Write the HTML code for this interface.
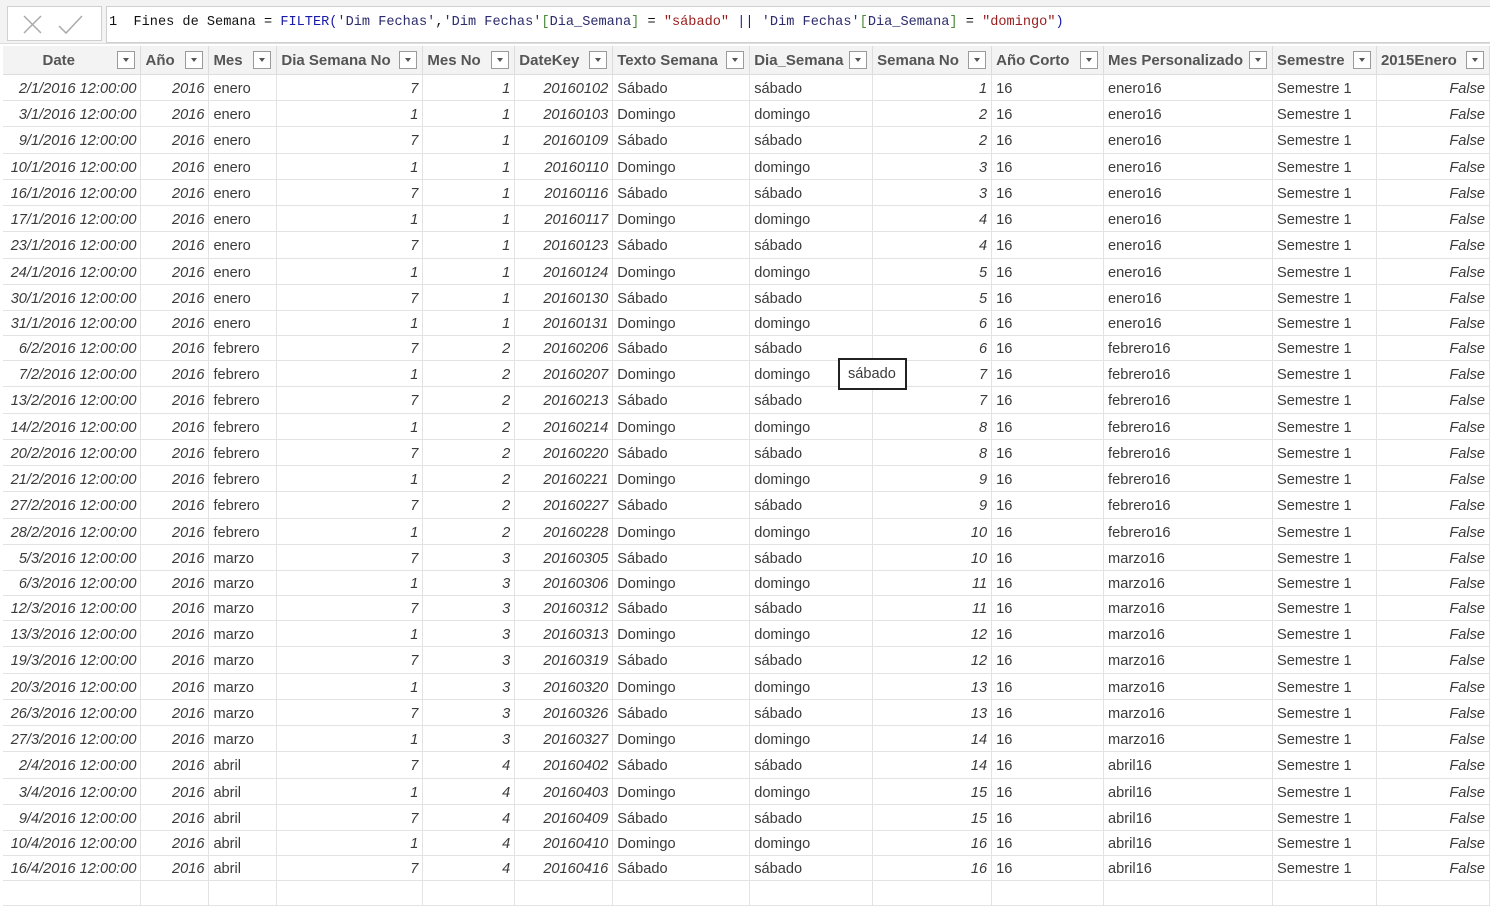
<!DOCTYPE html>
<html><head><meta charset="utf-8"><style>
*{box-sizing:border-box;margin:0;padding:0}
body{width:1490px;height:888px;overflow:hidden;background:#fff;font-family:"Liberation Sans",sans-serif;color:#3a3a3a;position:relative}
.topbar{position:absolute;left:0;top:0;width:1490px;height:44px;background:#f3f3f3;border-bottom:1px solid #ddd}
.btns{position:absolute;left:7px;top:6px;width:95px;height:35px;background:#fff;border:1px solid #d0d0d0}
.fx{position:absolute;left:106px;top:6px;width:1390px;height:37px;background:#fff;border:1px solid #d0d0d0;font-family:"Liberation Mono",monospace;font-size:13.6px;padding:8px 0 0 2px;white-space:pre;color:#111}
.b{color:#1a1aa8}.s{color:#9a1b1b}.g{color:#4a8a3a}.t{color:#2b2b6e}
table{position:absolute;left:3px;top:46px;border-collapse:collapse;table-layout:fixed;font-size:14.6px}
th{height:28px;background:#f3f3f3;color:#555;font-weight:bold;font-size:15px;text-align:left;padding:1px 4px 0;border-right:1px solid #dcdcdc;border-bottom:1px solid #dcdcdc;position:relative;white-space:nowrap}
th.c{text-align:center;padding-right:30px}
th i{position:absolute;right:5px;top:5px;width:18px;height:18px;background:#fff;border:1px solid #9a9a9a}
th i:after{content:"";position:absolute;left:5px;top:6px;border-left:3.5px solid transparent;border-right:3.5px solid transparent;border-top:4px solid #555}
td{padding:3px 4px 0;border-right:1px solid #e3e3e3;border-bottom:1px solid #e3e3e3;white-space:nowrap;overflow:hidden}
td.r{text-align:right;font-style:italic}
.tip{position:absolute;left:838px;top:358px;width:69px;height:32px;border:2px solid #222;background:#fff;font-size:14.6px;padding:6px 0 0 8px}
</style></head><body>
<div class="topbar"></div>
<div class="btns"><svg width="95" height="35" viewBox="0 0 95 35"><path d="M16 9L33 26M33 9L16 26" stroke="#aaa" stroke-width="1.5" fill="none"/><path d="M51 19l7 7 16-17" stroke="#aaa" stroke-width="1.5" fill="none"/></svg></div>
<div class="fx">1  Fines de Semana = <span class="b">FILTER(</span><span class="t">'Dim Fechas'</span>,<span class="t">'Dim Fechas'</span><span class="g">[</span><span class="t">Dia_Semana</span><span class="g">]</span> = <span class="s">"sábado"</span> <span class="b">||</span> <span class="t">'Dim Fechas'</span><span class="g">[</span><span class="t">Dia_Semana</span><span class="g">]</span> = <span class="s">"domingo"</span><span class="b">)</span></div>
<table>
<colgroup><col style="width:138px"><col style="width:68px"><col style="width:68px"><col style="width:146px"><col style="width:92px"><col style="width:98px"><col style="width:137px"><col style="width:123px"><col style="width:119px"><col style="width:112px"><col style="width:169px"><col style="width:104px"><col style="width:113px"></colgroup>
<tr><th class="c">Date<i></i></th><th>Año<i></i></th><th>Mes<i></i></th><th>Dia Semana No<i></i></th><th>Mes No<i></i></th><th>DateKey<i></i></th><th>Texto Semana<i></i></th><th>Dia_Semana<i></i></th><th>Semana No<i></i></th><th>Año Corto<i></i></th><th>Mes Personalizado<i></i></th><th>Semestre<i></i></th><th>2015Enero<i></i></th></tr>
<tr style="height:26px"><td class="r">2/1/2016 12:00:00</td><td class="r">2016</td><td>enero</td><td class="r">7</td><td class="r">1</td><td class="r">20160102</td><td>Sábado</td><td>sábado</td><td class="r">1</td><td>16</td><td>enero16</td><td>Semestre 1</td><td class="r">False</td></tr>
<tr style="height:26px"><td class="r">3/1/2016 12:00:00</td><td class="r">2016</td><td>enero</td><td class="r">1</td><td class="r">1</td><td class="r">20160103</td><td>Domingo</td><td>domingo</td><td class="r">2</td><td>16</td><td>enero16</td><td>Semestre 1</td><td class="r">False</td></tr>
<tr style="height:27px"><td class="r">9/1/2016 12:00:00</td><td class="r">2016</td><td>enero</td><td class="r">7</td><td class="r">1</td><td class="r">20160109</td><td>Sábado</td><td>sábado</td><td class="r">2</td><td>16</td><td>enero16</td><td>Semestre 1</td><td class="r">False</td></tr>
<tr style="height:26px"><td class="r">10/1/2016 12:00:00</td><td class="r">2016</td><td>enero</td><td class="r">1</td><td class="r">1</td><td class="r">20160110</td><td>Domingo</td><td>domingo</td><td class="r">3</td><td>16</td><td>enero16</td><td>Semestre 1</td><td class="r">False</td></tr>
<tr style="height:26px"><td class="r">16/1/2016 12:00:00</td><td class="r">2016</td><td>enero</td><td class="r">7</td><td class="r">1</td><td class="r">20160116</td><td>Sábado</td><td>sábado</td><td class="r">3</td><td>16</td><td>enero16</td><td>Semestre 1</td><td class="r">False</td></tr>
<tr style="height:26px"><td class="r">17/1/2016 12:00:00</td><td class="r">2016</td><td>enero</td><td class="r">1</td><td class="r">1</td><td class="r">20160117</td><td>Domingo</td><td>domingo</td><td class="r">4</td><td>16</td><td>enero16</td><td>Semestre 1</td><td class="r">False</td></tr>
<tr style="height:27px"><td class="r">23/1/2016 12:00:00</td><td class="r">2016</td><td>enero</td><td class="r">7</td><td class="r">1</td><td class="r">20160123</td><td>Sábado</td><td>sábado</td><td class="r">4</td><td>16</td><td>enero16</td><td>Semestre 1</td><td class="r">False</td></tr>
<tr style="height:26px"><td class="r">24/1/2016 12:00:00</td><td class="r">2016</td><td>enero</td><td class="r">1</td><td class="r">1</td><td class="r">20160124</td><td>Domingo</td><td>domingo</td><td class="r">5</td><td>16</td><td>enero16</td><td>Semestre 1</td><td class="r">False</td></tr>
<tr style="height:26px"><td class="r">30/1/2016 12:00:00</td><td class="r">2016</td><td>enero</td><td class="r">7</td><td class="r">1</td><td class="r">20160130</td><td>Sábado</td><td>sábado</td><td class="r">5</td><td>16</td><td>enero16</td><td>Semestre 1</td><td class="r">False</td></tr>
<tr style="height:25px"><td class="r">31/1/2016 12:00:00</td><td class="r">2016</td><td>enero</td><td class="r">1</td><td class="r">1</td><td class="r">20160131</td><td>Domingo</td><td>domingo</td><td class="r">6</td><td>16</td><td>enero16</td><td>Semestre 1</td><td class="r">False</td></tr>
<tr style="height:25px"><td class="r">6/2/2016 12:00:00</td><td class="r">2016</td><td>febrero</td><td class="r">7</td><td class="r">2</td><td class="r">20160206</td><td>Sábado</td><td>sábado</td><td class="r">6</td><td>16</td><td>febrero16</td><td>Semestre 1</td><td class="r">False</td></tr>
<tr style="height:26px"><td class="r">7/2/2016 12:00:00</td><td class="r">2016</td><td>febrero</td><td class="r">1</td><td class="r">2</td><td class="r">20160207</td><td>Domingo</td><td>domingo</td><td class="r">7</td><td>16</td><td>febrero16</td><td>Semestre 1</td><td class="r">False</td></tr>
<tr style="height:27px"><td class="r">13/2/2016 12:00:00</td><td class="r">2016</td><td>febrero</td><td class="r">7</td><td class="r">2</td><td class="r">20160213</td><td>Sábado</td><td>sábado</td><td class="r">7</td><td>16</td><td>febrero16</td><td>Semestre 1</td><td class="r">False</td></tr>
<tr style="height:26px"><td class="r">14/2/2016 12:00:00</td><td class="r">2016</td><td>febrero</td><td class="r">1</td><td class="r">2</td><td class="r">20160214</td><td>Domingo</td><td>domingo</td><td class="r">8</td><td>16</td><td>febrero16</td><td>Semestre 1</td><td class="r">False</td></tr>
<tr style="height:26px"><td class="r">20/2/2016 12:00:00</td><td class="r">2016</td><td>febrero</td><td class="r">7</td><td class="r">2</td><td class="r">20160220</td><td>Sábado</td><td>sábado</td><td class="r">8</td><td>16</td><td>febrero16</td><td>Semestre 1</td><td class="r">False</td></tr>
<tr style="height:26px"><td class="r">21/2/2016 12:00:00</td><td class="r">2016</td><td>febrero</td><td class="r">1</td><td class="r">2</td><td class="r">20160221</td><td>Domingo</td><td>domingo</td><td class="r">9</td><td>16</td><td>febrero16</td><td>Semestre 1</td><td class="r">False</td></tr>
<tr style="height:27px"><td class="r">27/2/2016 12:00:00</td><td class="r">2016</td><td>febrero</td><td class="r">7</td><td class="r">2</td><td class="r">20160227</td><td>Sábado</td><td>sábado</td><td class="r">9</td><td>16</td><td>febrero16</td><td>Semestre 1</td><td class="r">False</td></tr>
<tr style="height:26px"><td class="r">28/2/2016 12:00:00</td><td class="r">2016</td><td>febrero</td><td class="r">1</td><td class="r">2</td><td class="r">20160228</td><td>Domingo</td><td>domingo</td><td class="r">10</td><td>16</td><td>febrero16</td><td>Semestre 1</td><td class="r">False</td></tr>
<tr style="height:26px"><td class="r">5/3/2016 12:00:00</td><td class="r">2016</td><td>marzo</td><td class="r">7</td><td class="r">3</td><td class="r">20160305</td><td>Sábado</td><td>sábado</td><td class="r">10</td><td>16</td><td>marzo16</td><td>Semestre 1</td><td class="r">False</td></tr>
<tr style="height:25px"><td class="r">6/3/2016 12:00:00</td><td class="r">2016</td><td>marzo</td><td class="r">1</td><td class="r">3</td><td class="r">20160306</td><td>Domingo</td><td>domingo</td><td class="r">11</td><td>16</td><td>marzo16</td><td>Semestre 1</td><td class="r">False</td></tr>
<tr style="height:25px"><td class="r">12/3/2016 12:00:00</td><td class="r">2016</td><td>marzo</td><td class="r">7</td><td class="r">3</td><td class="r">20160312</td><td>Sábado</td><td>sábado</td><td class="r">11</td><td>16</td><td>marzo16</td><td>Semestre 1</td><td class="r">False</td></tr>
<tr style="height:26px"><td class="r">13/3/2016 12:00:00</td><td class="r">2016</td><td>marzo</td><td class="r">1</td><td class="r">3</td><td class="r">20160313</td><td>Domingo</td><td>domingo</td><td class="r">12</td><td>16</td><td>marzo16</td><td>Semestre 1</td><td class="r">False</td></tr>
<tr style="height:27px"><td class="r">19/3/2016 12:00:00</td><td class="r">2016</td><td>marzo</td><td class="r">7</td><td class="r">3</td><td class="r">20160319</td><td>Sábado</td><td>sábado</td><td class="r">12</td><td>16</td><td>marzo16</td><td>Semestre 1</td><td class="r">False</td></tr>
<tr style="height:26px"><td class="r">20/3/2016 12:00:00</td><td class="r">2016</td><td>marzo</td><td class="r">1</td><td class="r">3</td><td class="r">20160320</td><td>Domingo</td><td>domingo</td><td class="r">13</td><td>16</td><td>marzo16</td><td>Semestre 1</td><td class="r">False</td></tr>
<tr style="height:26px"><td class="r">26/3/2016 12:00:00</td><td class="r">2016</td><td>marzo</td><td class="r">7</td><td class="r">3</td><td class="r">20160326</td><td>Sábado</td><td>sábado</td><td class="r">13</td><td>16</td><td>marzo16</td><td>Semestre 1</td><td class="r">False</td></tr>
<tr style="height:26px"><td class="r">27/3/2016 12:00:00</td><td class="r">2016</td><td>marzo</td><td class="r">1</td><td class="r">3</td><td class="r">20160327</td><td>Domingo</td><td>domingo</td><td class="r">14</td><td>16</td><td>marzo16</td><td>Semestre 1</td><td class="r">False</td></tr>
<tr style="height:27px"><td class="r">2/4/2016 12:00:00</td><td class="r">2016</td><td>abril</td><td class="r">7</td><td class="r">4</td><td class="r">20160402</td><td>Sábado</td><td>sábado</td><td class="r">14</td><td>16</td><td>abril16</td><td>Semestre 1</td><td class="r">False</td></tr>
<tr style="height:26px"><td class="r">3/4/2016 12:00:00</td><td class="r">2016</td><td>abril</td><td class="r">1</td><td class="r">4</td><td class="r">20160403</td><td>Domingo</td><td>domingo</td><td class="r">15</td><td>16</td><td>abril16</td><td>Semestre 1</td><td class="r">False</td></tr>
<tr style="height:26px"><td class="r">9/4/2016 12:00:00</td><td class="r">2016</td><td>abril</td><td class="r">7</td><td class="r">4</td><td class="r">20160409</td><td>Sábado</td><td>sábado</td><td class="r">15</td><td>16</td><td>abril16</td><td>Semestre 1</td><td class="r">False</td></tr>
<tr style="height:25px"><td class="r">10/4/2016 12:00:00</td><td class="r">2016</td><td>abril</td><td class="r">1</td><td class="r">4</td><td class="r">20160410</td><td>Domingo</td><td>domingo</td><td class="r">16</td><td>16</td><td>abril16</td><td>Semestre 1</td><td class="r">False</td></tr>
<tr style="height:25px"><td class="r">16/4/2016 12:00:00</td><td class="r">2016</td><td>abril</td><td class="r">7</td><td class="r">4</td><td class="r">20160416</td><td>Sábado</td><td>sábado</td><td class="r">16</td><td>16</td><td>abril16</td><td>Semestre 1</td><td class="r">False</td></tr>
<tr style="height:25px"><td></td><td></td><td></td><td></td><td></td><td></td><td></td><td></td><td></td><td></td><td></td><td></td><td></td></tr>
</table>
<div class="tip">sábado</div>
</body></html>
